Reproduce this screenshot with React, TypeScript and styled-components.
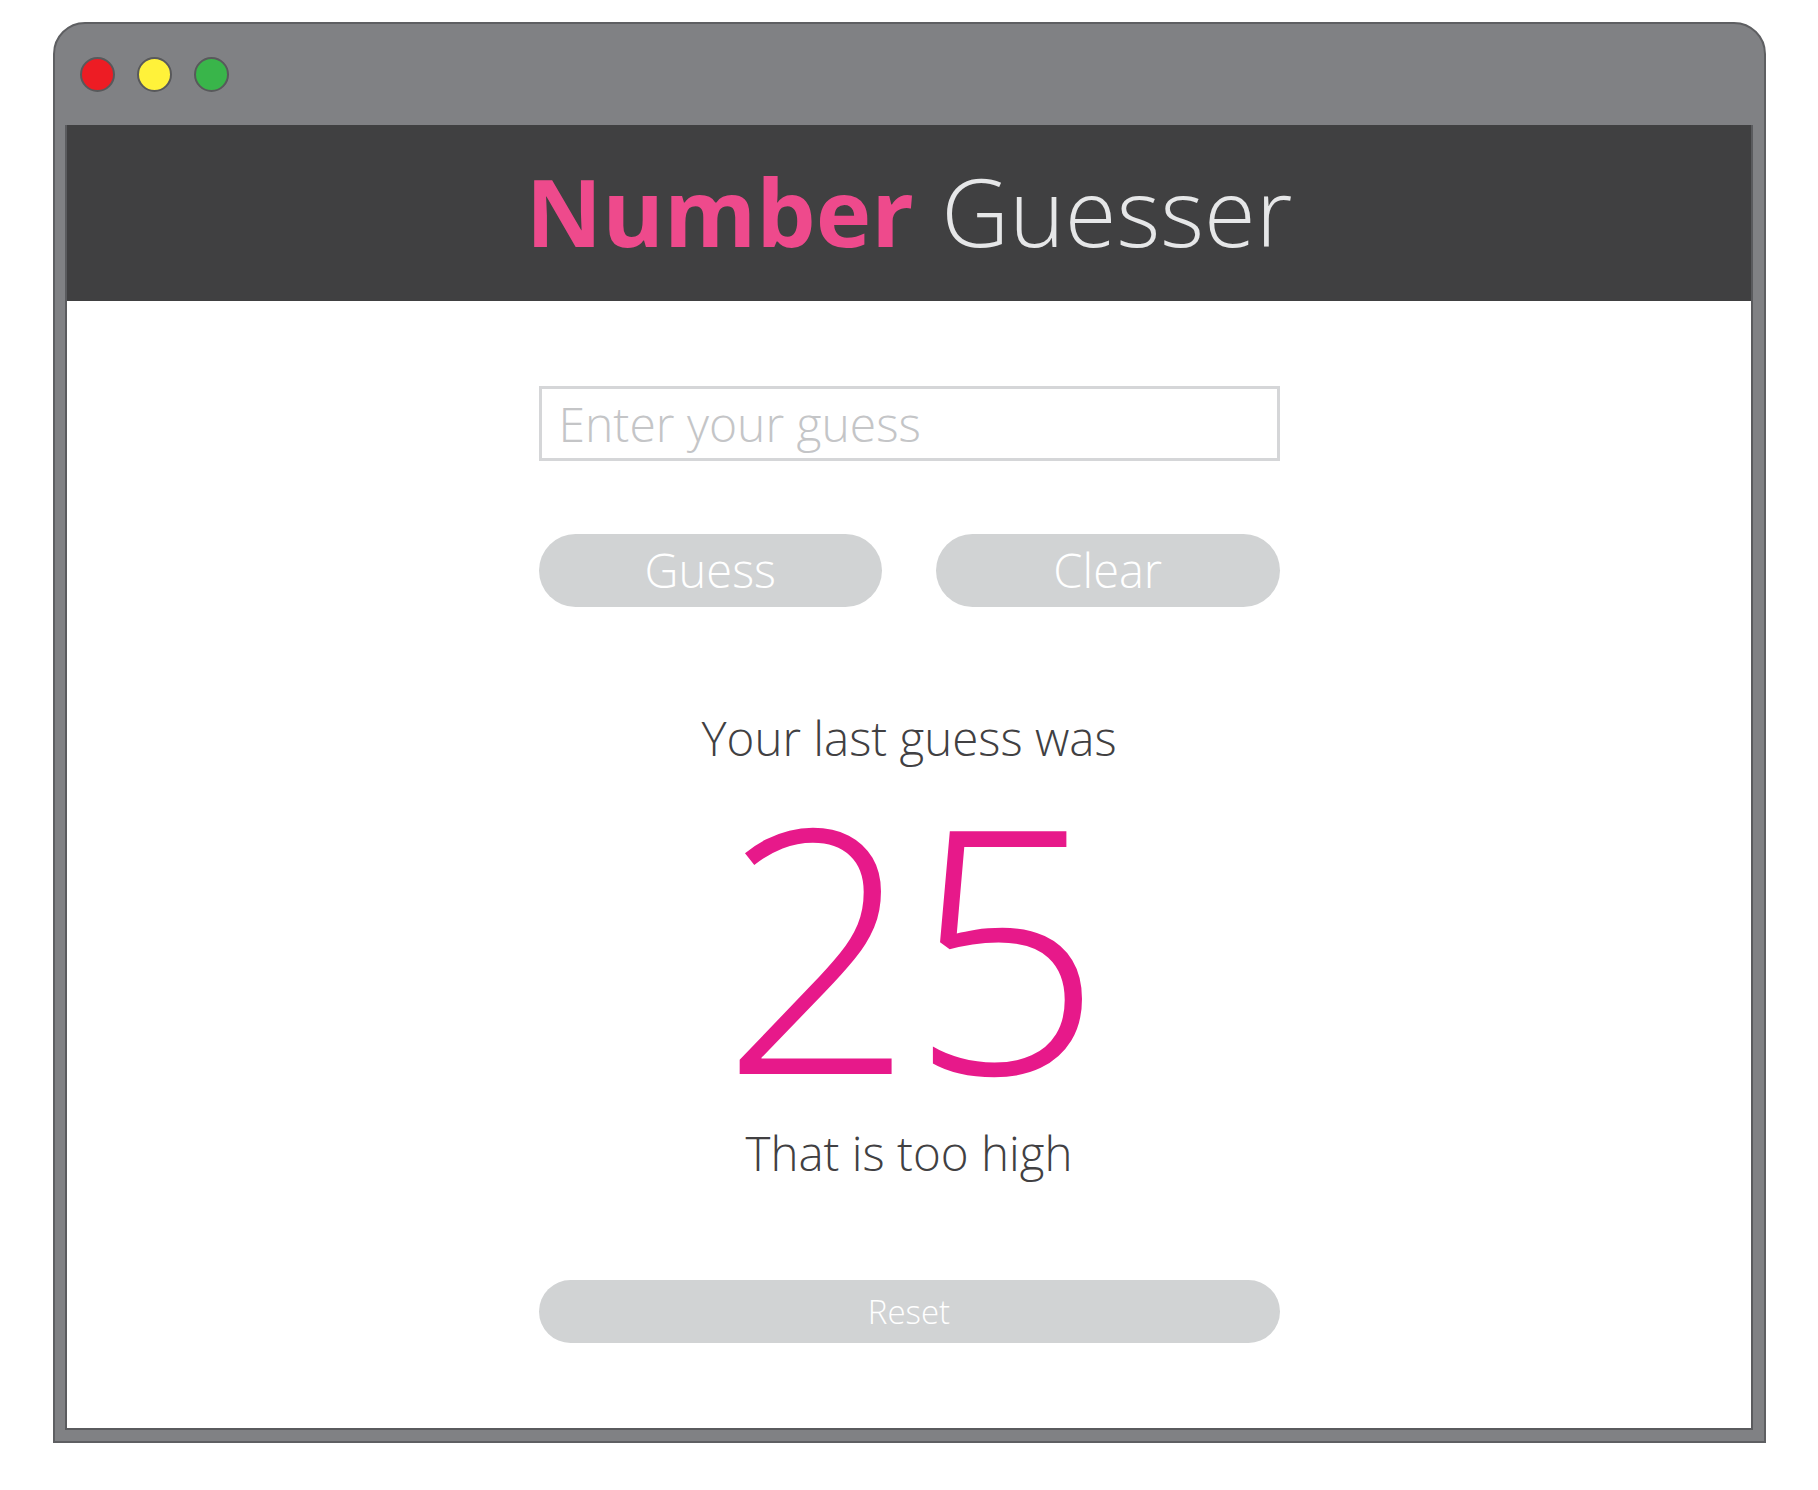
import React from 'react';
import styled, { createGlobalStyle } from 'styled-components';

const GlobalStyle = createGlobalStyle`
  html, body {
    margin: 0;
    padding: 0;
    background: #ffffff;
  }
  body {
    font-family: 'Open Sans', 'Liberation Sans', sans-serif;
  }
  * {
    box-sizing: border-box;
  }
`;

const Page = styled.div`
  padding: 22px 0 0 53px;
  width: 1818px;
  height: 1490px;
`;

const Window = styled.div`
  width: 1713px;
  height: 1421px;
  background: #808184;
  border: 2px solid #5e5f62;
  border-radius: 32px 32px 0 0;
  padding: 0 11px 11px 10px;
  display: flex;
  flex-direction: column;
`;

const TitleBar = styled.div`
  height: 101px;
  display: flex;
  align-items: center;
  gap: 22px;
  padding-left: 15px;
  flex-shrink: 0;
`;

const Dot = styled.span<{ $color: string }>`
  width: 35px;
  height: 35px;
  border-radius: 50%;
  background: ${(p) => p.$color};
  border: 2px solid #58595b;
`;

const Content = styled.div`
  flex: 1;
  background: #ffffff;
  border: 2px solid #5a5b5e;
  border-top: none;
  display: flex;
  flex-direction: column;
`;

const Header = styled.header`
  height: 176px;
  background: #404041;
  display: flex;
  align-items: center;
  justify-content: center;
  flex-shrink: 0;
`;

const Title = styled.h1`
  margin: 0;
  font-size: 94px;
  line-height: 1;
  font-weight: 300;
  color: #e6e7e8;
  letter-spacing: 0;
  transform: translate(0px, -2px);
`;

const Accent = styled.span`
  font-weight: 700;
  color: #ee4a8c;
  margin-right: 3px;
`;

const Body = styled.main`
  flex: 1;
  display: flex;
  flex-direction: column;
  align-items: center;
  padding-top: 85px;
`;

const Controls = styled.div`
  width: 741px;
  display: flex;
  flex-direction: column;
  gap: 73px;
`;

const GuessInput = styled.input`
  width: 100%;
  height: 75px;
  border: 3px solid #d5d6d8;
  padding: 0 0 0 17px;
  font-family: 'Open Sans', 'Liberation Sans', sans-serif;
  font-weight: 300;
  font-size: 48px;
  color: #414042;
  outline: none;
  &::placeholder {
    color: #c4c5c7;
  }
`;

const ButtonRow = styled.div`
  display: flex;
  gap: 54px;
`;

const PillButton = styled.button<{ $height: number; $size: number }>`
  flex: 1;
  height: ${(p) => p.$height}px;
  border: none;
  border-radius: 999px;
  background: #d1d3d4;
  color: #ffffff;
  font-family: 'Open Sans', 'Liberation Sans', sans-serif;
  font-weight: 300;
  font-size: ${(p) => p.$size}px;
  line-height: 1;
  padding: 0;
  cursor: pointer;
`;

const Label = styled.p<{ $top: number }>`
  margin: ${(p) => p.$top}px 0 0;
  font-size: 47.5px;
  line-height: 55px;
  font-weight: 300;
  color: #414042;
`;

const BigNumber = styled.div`
  margin-top: 8px;
  font-size: 340px;
  line-height: 340px;
  font-weight: 300;
  color: #e7198a;
  letter-spacing: -6px;
`;

const ResetRow = styled.div`
  width: 741px;
  margin-top: 100px;
  display: flex;
`;

export default function App() {
  return (
    <>
      <GlobalStyle />
      <Page>
        <Window>
          <TitleBar>
            <Dot $color="#ed1c24" />
            <Dot $color="#fff23a" />
            <Dot $color="#39b54a" />
          </TitleBar>
          <Content>
            <Header>
              <Title>
                <Accent>Number</Accent> Guesser
              </Title>
            </Header>
            <Body>
              <Controls>
                <GuessInput placeholder="Enter your guess" />
                <ButtonRow>
                  <PillButton $height={73} $size={47}>Guess</PillButton>
                  <PillButton $height={73} $size={47}>Clear</PillButton>
                </ButtonRow>
              </Controls>
              <Label $top={103}>Your last guess was</Label>
              <BigNumber>25</BigNumber>
              <Label $top={12}>That is too high</Label>
              <ResetRow>
                <PillButton $height={63} $size={33}>Reset</PillButton>
              </ResetRow>
            </Body>
          </Content>
        </Window>
      </Page>
    </>
  );
}
